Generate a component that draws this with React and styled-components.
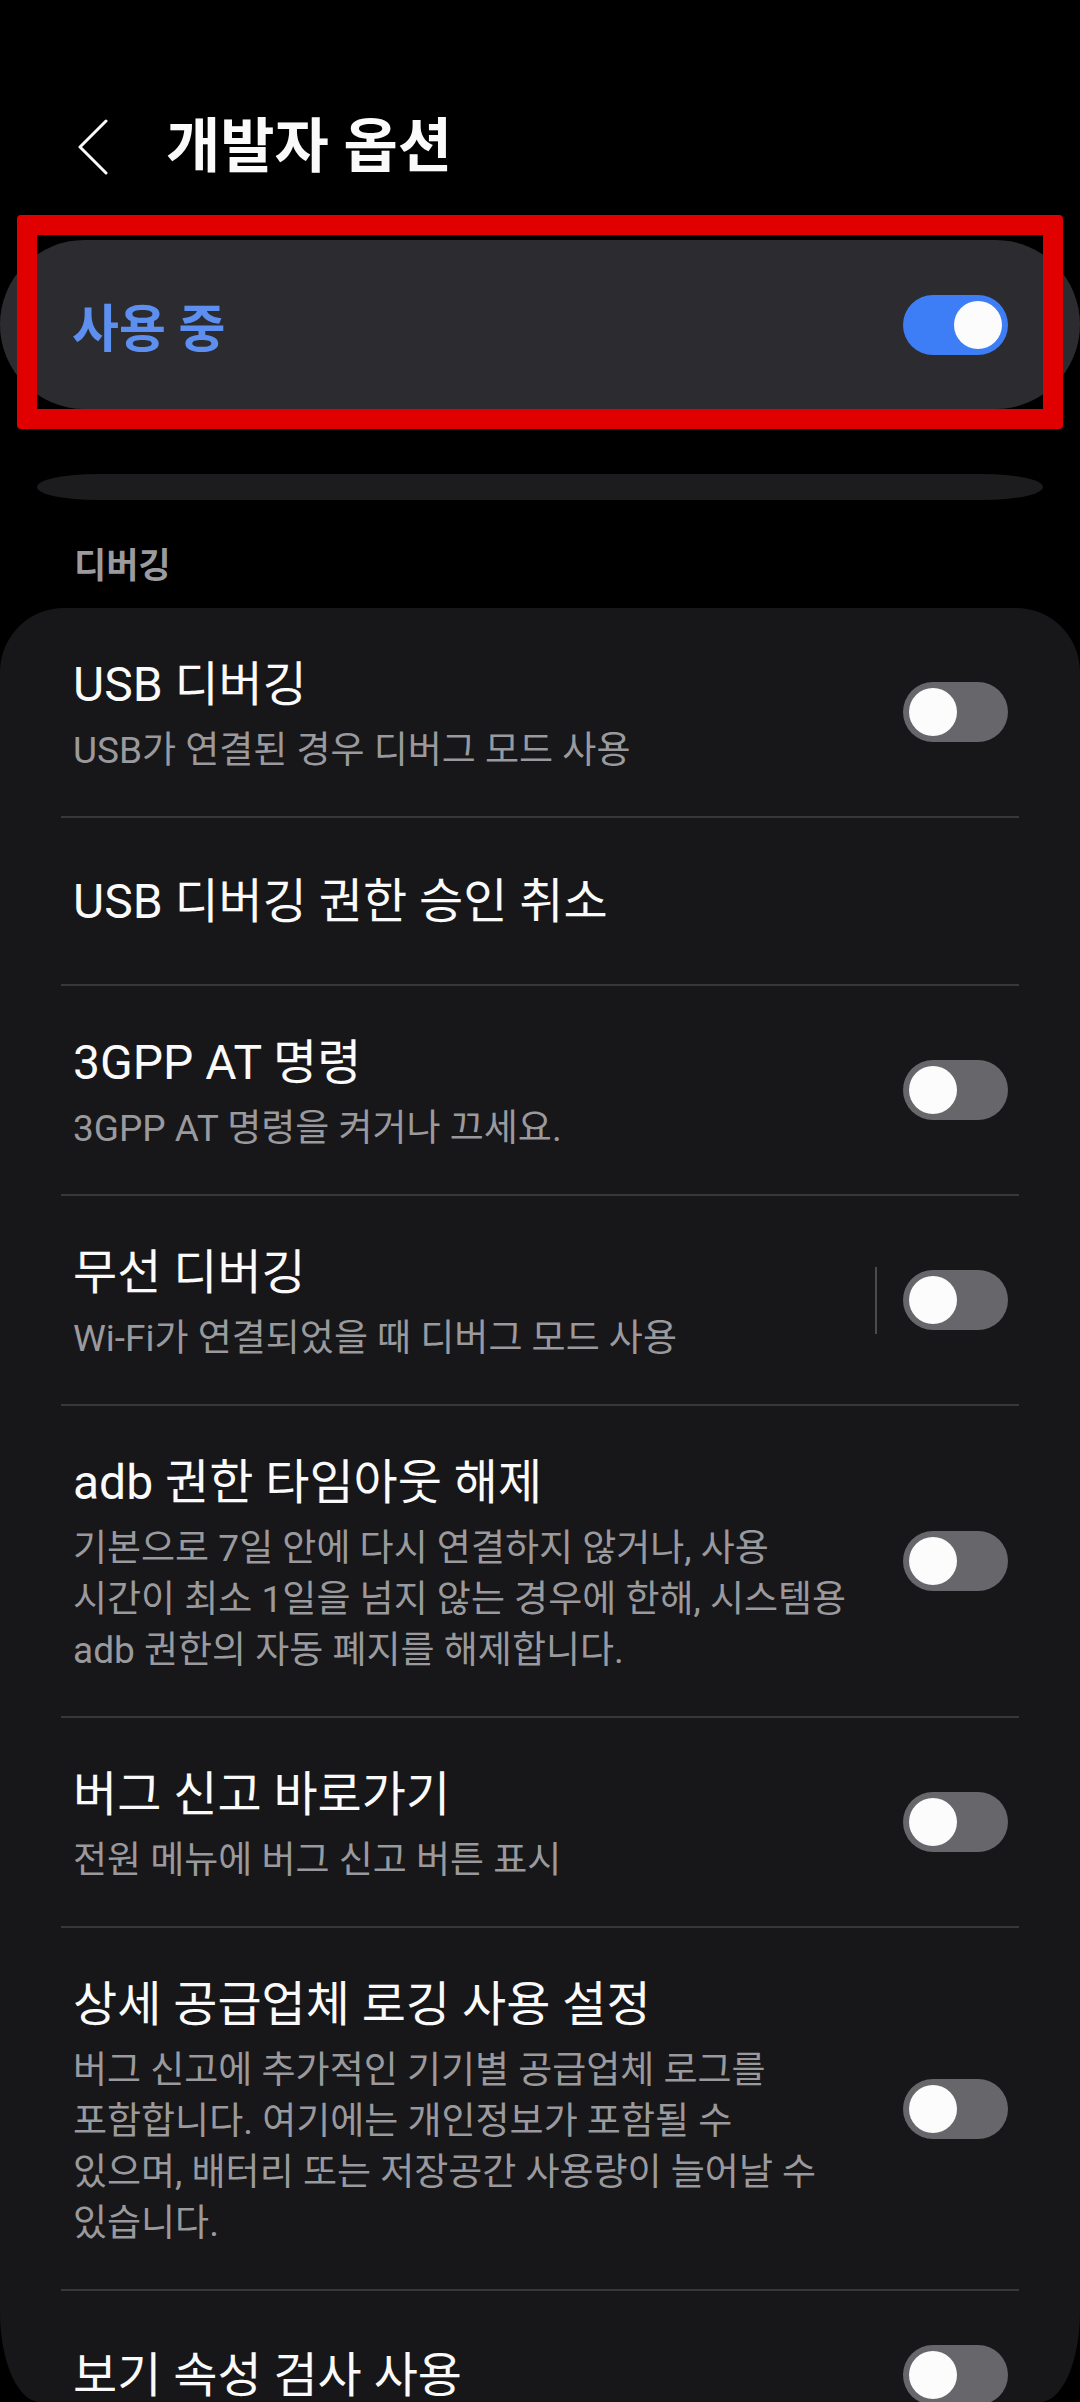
import React from 'react';
import styled, { createGlobalStyle } from 'styled-components';

const GlobalStyle = createGlobalStyle`
	html, body {
		margin: 0;
		padding: 0;
		background: #000;
	}
	body {
		font-family: Roboto, "Noto Sans CJK KR", sans-serif;
		-webkit-font-smoothing: antialiased;
	}
	* {
		box-sizing: border-box;
	}
`;

const Screen = styled.div`
	width: 1080px;
	height: 2402px;
	overflow: hidden;
	background: #000;
	border-radius: 0 0 40px 40px / 0 0 90px 90px;
`;

const Header = styled.header`
	display: flex;
	align-items: center;
	gap: 58px;
	height: 202px;
	padding: 92px 0 0 78px;
`;

const BackButton = styled.button`
	display: flex;
	background: none;
	border: none;
	padding: 0;
	cursor: pointer;
`;

const PageTitle = styled.h1`
	margin: 0;
	font-size: 59px;
	font-weight: 700;
	line-height: 110px;
	color: #fafafa;
`;

const MasterRow = styled.div`
	position: relative;
	display: flex;
	align-items: center;
	justify-content: space-between;
	height: 169px;
	margin-top: 38px;
	padding: 0 72px;
	border-radius: 85px;
	background: #2c2c30;
`;

const MasterLabel = styled.span`
	font-size: 51px;
	font-weight: 700;
	color: #5d8ff0;
`;

const RedFrame = styled.div`
	position: absolute;
	top: -25px;
	bottom: -20px;
	left: 17px;
	right: 17px;
	border: 20px solid #e10000;
	border-radius: 4px;
	pointer-events: none;
`;

const PeekBar = styled.div`
	height: 26px;
	margin: 65px 37px 0;
	border-radius: 60px / 13px;
	background: #1c1c1e;
`;

const SectionLabel = styled.h2`
	margin: 47px 0 0 74px;
	font-size: 35px;
	font-weight: 700;
	line-height: 40px;
	color: #9b9b9f;
`;

const Card = styled.section`
	margin-top: 21px;
	padding: 0 61px;
	border-radius: 64px 64px 0 0;
	background: #171719;
`;

const Row = styled.div`
	display: flex;
	align-items: center;
	justify-content: space-between;
	min-height: 168px;
	padding: 40px 11px 40px 12px;
	border-bottom: ${({ $last }) => ($last ? 'none' : '2px solid #38383b')};
`;

const TextBlock = styled.div`
	display: flex;
	flex-direction: column;
	padding-top: ${({ $withSummary }) => ($withSummary ? '8px' : '0')};
`;

const Title = styled.div`
	font-size: 48px;
	line-height: 57px;
	color: #fafafa;
	white-space: nowrap;
`;

const Summary = styled.div`
	margin-top: 12px;
	font-size: 37px;
	line-height: 51px;
	color: #9a9a9e;
	white-space: nowrap;
`;

const Controls = styled.div`
	display: flex;
	align-items: center;
`;

const VSep = styled.div`
	width: 2px;
	height: 67px;
	margin-right: 26px;
	background: #4b4b4e;
`;

const Track = styled.div`
	position: relative;
	width: 105px;
	height: 60px;
	border-radius: 30px;
	background: ${({ $on }) => ($on ? '#3d7ef6' : '#67676b')};
`;

const Knob = styled.div`
	position: absolute;
	top: 6px;
	left: ${({ $on }) => ($on ? '51px' : '6px')};
	width: 48px;
	height: 48px;
	border-radius: 50%;
	background: #fcfcfc;
`;

const Toggle = ({ on }) => (
	<Track $on={on}>
		<Knob $on={on} />
	</Track>
);

const items = [
	{ title: 'USB 디버깅', lines: ['USB가 연결된 경우 디버그 모드 사용'], toggle: true },
	{ title: 'USB 디버깅 권한 승인 취소', lines: [], toggle: false },
	{ title: '3GPP AT 명령', lines: ['3GPP AT 명령을 켜거나 끄세요.'], toggle: true },
	{ title: '무선 디버깅', lines: ['Wi-Fi가 연결되었을 때 디버그 모드 사용'], toggle: true, split: true },
	{
		title: 'adb 권한 타임아웃 해제',
		lines: [
			'기본으로 7일 안에 다시 연결하지 않거나, 사용',
			'시간이 최소 1일을 넘지 않는 경우에 한해, 시스템용',
			'adb 권한의 자동 폐지를 해제합니다.',
		],
		toggle: true,
	},
	{ title: '버그 신고 바로가기', lines: ['전원 메뉴에 버그 신고 버튼 표시'], toggle: true },
	{
		title: '상세 공급업체 로깅 사용 설정',
		lines: [
			'버그 신고에 추가적인 기기별 공급업체 로그를',
			'포함합니다. 여기에는 개인정보가 포함될 수',
			'있으며, 배터리 또는 저장공간 사용량이 늘어날 수',
			'있습니다.',
		],
		toggle: true,
	},
	{ title: '보기 속성 검사 사용', lines: [], toggle: true },
];

const App = () => {
	return (
		<Screen>
			<GlobalStyle />
			<Header>
				<BackButton aria-label="뒤로">
					<svg width="30" height="56" viewBox="0 0 30 56" fill="none">
						<polyline
							points="28,2 2,28 28,54"
							stroke="#fafafa"
							strokeWidth="3"
							strokeLinecap="round"
							strokeLinejoin="round"
						/>
					</svg>
				</BackButton>
				<PageTitle>개발자 옵션</PageTitle>
			</Header>

			<MasterRow>
				<MasterLabel>사용 중</MasterLabel>
				<Toggle on />
				<RedFrame />
			</MasterRow>

			<PeekBar />

			<SectionLabel>디버깅</SectionLabel>

			<Card>
				{items.map((item, i) => (
					<Row key={item.title} $last={i === items.length - 1}>
						<TextBlock $withSummary={item.lines.length > 0}>
							<Title>{item.title}</Title>
							{item.lines.length > 0 && (
								<Summary>
									{item.lines.map((line) => (
										<div key={line}>{line}</div>
									))}
								</Summary>
							)}
						</TextBlock>
						{item.toggle && (
							<Controls>
								{item.split && <VSep />}
								<Toggle on={false} />
							</Controls>
						)}
					</Row>
				))}
			</Card>
		</Screen>
	);
};

export default App;
